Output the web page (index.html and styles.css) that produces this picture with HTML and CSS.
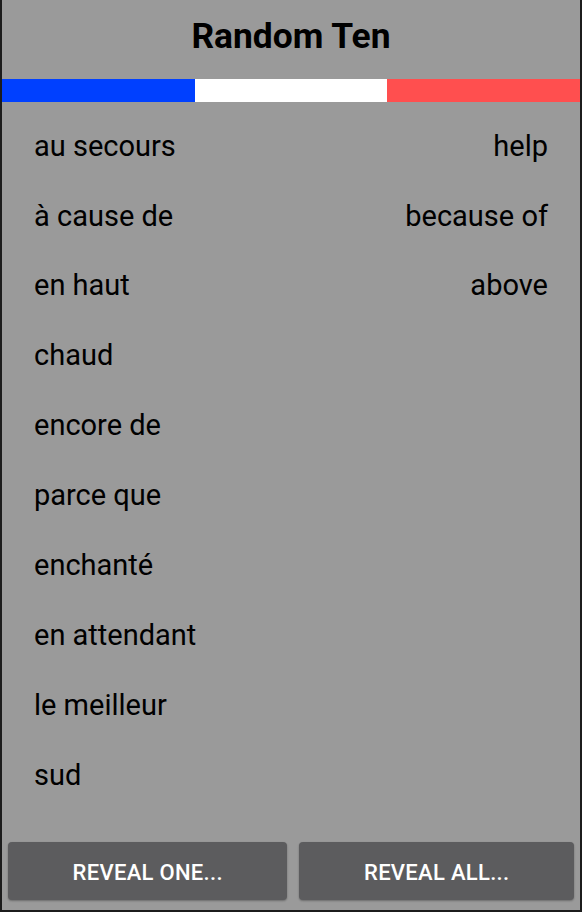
FILE: index.html
```html
<!DOCTYPE html>
<html lang="en">

<head>
    <meta charset="UTF-8">
    <meta name="viewport" content="width=device-width, initial-scale=1.0">
    <title>Random Ten</title>
    <link rel="stylesheet" href="styles.css">
</head>

<body>
    <div class="screen">
        <h1 class="title">Random Ten</h1>
        <div class="flag">
            <div class="flag-blue"></div>
            <div class="flag-white"></div>
            <div class="flag-red"></div>
        </div>
        <div class="words">
            <div class="row"><span lang="fr">au secours</span><span>help</span></div>
            <div class="row"><span lang="fr">à cause de</span><span>because of</span></div>
            <div class="row"><span lang="fr">en haut</span><span>above</span></div>
            <div class="row"><span lang="fr">chaud</span></div>
            <div class="row"><span lang="fr">encore de</span></div>
            <div class="row"><span lang="fr">parce que</span></div>
            <div class="row"><span lang="fr">enchanté</span></div>
            <div class="row"><span lang="fr">en attendant</span></div>
            <div class="row"><span lang="fr">le meilleur</span></div>
            <div class="row"><span lang="fr">sud</span></div>
        </div>
        <div class="buttons">
            <button class="btn">REVEAL ONE...</button>
            <button class="btn">REVEAL ALL...</button>
        </div>
    </div>
</body>

</html>
```

FILE: styles.css
```css
* {
    margin: 0;
    padding: 0;
    box-sizing: border-box;
}

body {
    background-color: #1c1c1c;
    font-family: Roboto, "Liberation Sans", sans-serif;
    height: 912px;
    overflow: hidden;
}

.screen {
    height: 910px;
    margin: 0 2px;
    background-color: #9a9a9a;
    display: flex;
    flex-direction: column;
}

.title {
    height: 79px;
    line-height: 72px;
    font-size: 35.4px;
    font-weight: 700;
    text-align: center;
    color: #000;
}

.flag {
    height: 23px;
    display: flex;
}

.flag-blue,
.flag-white,
.flag-red {
    flex: 1;
}

.flag-blue {
    background-color: #0040ff;
}

.flag-white {
    background-color: #fff;
}

.flag-red {
    background-color: #ff4f4f;
}

.words {
    padding: 9.7px 32px 0 32px;
}

.row {
    height: 69.9px;
    line-height: 69.9px;
    display: flex;
    justify-content: space-between;
    font-size: 29px;
    color: #000;
}

.buttons {
    margin-top: auto;
    padding: 0 6px 10px 6px;
    display: flex;
    gap: 12px;
}

.btn {
    flex: 1 1 auto;
    height: 58px;
    padding-top: 3px;
    border: none;
    border-radius: 4px;
    background-color: #5c5c5e;
    box-shadow: 0 1px 2px rgba(0, 0, 0, 0.3);
    color: #fff;
    font-family: inherit;
    font-size: 22px;
    font-weight: 500;
    letter-spacing: 0.3px;
}
```
